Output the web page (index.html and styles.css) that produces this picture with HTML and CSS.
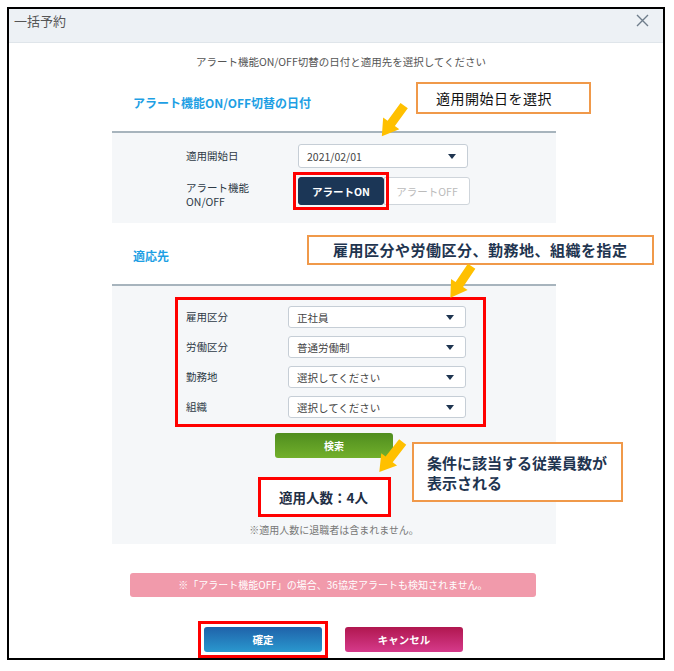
FILE: index.html
```html
<!DOCTYPE html>
<html lang="ja">
<head>
    <meta charset="UTF-8">
    <meta name="viewport" content="width=device-width, initial-scale=1.0">
    <title>一括予約</title>
    <link rel="stylesheet" href="styles.css">
</head>
<body>
    <div class="dialog">
        <div class="dialog-header">
            <span class="dialog-title">一括予約</span>
            <span class="dialog-close">
                <svg width="13" height="13" viewBox="0 0 13 13"><path d="M1 1L12 12M12 1L1 12" stroke="#6f7d8b" stroke-width="1.4" fill="none"/></svg>
            </span>
        </div>

        <div class="dialog-body">
            <p class="lead">アラート機能ON/OFF切替の日付と適用先を選択してください</p>

            <!-- 切替日付 -->
            <h2 class="block-title">アラート機能ON/OFF切替の日付</h2>
            <div class="panel panel-date">
                <div class="field">
                    <span class="field-label">適用開始日</span>
                    <div class="select select-wide"><span>2021/02/01</span><i class="caret"></i></div>
                </div>
                <div class="field">
                    <span class="field-label field-label-2">アラート機能<br>ON/OFF</span>
                    <div class="toggle">
                        <button class="toggle-btn is-on mark">アラートON</button>
                        <button class="toggle-btn">アラートOFF</button>
                    </div>
                </div>
            </div>

            <!-- 適応先 -->
            <h2 class="block-title">適応先</h2>
            <div class="panel panel-target">
                <div class="field-group">
                    <div class="field field-sm">
                        <span class="field-label">雇用区分</span>
                        <div class="select"><span>正社員</span><i class="caret"></i></div>
                    </div>
                    <div class="field field-sm">
                        <span class="field-label">労働区分</span>
                        <div class="select"><span>普通労働制</span><i class="caret"></i></div>
                    </div>
                    <div class="field field-sm">
                        <span class="field-label">勤務地</span>
                        <div class="select"><span>選択してください</span><i class="caret"></i></div>
                    </div>
                    <div class="field field-sm">
                        <span class="field-label">組織</span>
                        <div class="select"><span>選択してください</span><i class="caret"></i></div>
                    </div>
                </div>
                <button class="btn-search">検索</button>
                <div class="count">適用人数：4人</div>
                <p class="note">※適用人数に退職者は含まれません。</p>
            </div>

            <div class="warning">※「アラート機能OFF」の場合、36協定アラートも検知されません。</div>

            <div class="actions">
                <button class="btn btn-ok mark">確定</button>
                <button class="btn btn-cancel">キャンセル</button>
            </div>
        </div>

        <!-- 説明用の吹き出し -->
        <div class="callout callout-date">適用開始日を選択</div>
        <div class="callout callout-target">雇用区分や労働区分、勤務地、組織を指定</div>
        <div class="callout callout-count">条件に該当する従業員数が<br>表示される</div>

        <svg class="arrow arrow-date" width="44" height="44" viewBox="0 0 44 44"><polygon transform="translate(22,22) rotate(126) translate(-19,0)" points="0,-4.5 22,-4.5 22,-10 38,0 22,10 22,4.5 0,4.5" fill="#ffc000"/></svg>
        <svg class="arrow arrow-target" width="44" height="44" viewBox="0 0 44 44"><polygon transform="translate(22,22) rotate(124) translate(-19,0)" points="0,-4.5 22,-4.5 22,-10 38,0 22,10 22,4.5 0,4.5" fill="#ffc000"/></svg>
        <svg class="arrow arrow-count" width="44" height="44" viewBox="0 0 44 44"><polygon transform="translate(22,22) rotate(128) translate(-19,0)" points="0,-4.5 22,-4.5 22,-10 38,0 22,10 22,4.5 0,4.5" fill="#ffc000"/></svg>
    </div>
</body>
</html>
```

FILE: styles.css
```css
* {
    box-sizing: border-box;
}
body {
    margin: 0;
    font-family: "Noto Sans CJK JP", "Noto Sans", sans-serif;
    color: #333;
    background: #fff;
}
.dialog {
    position: relative;
    margin: 7px 0 0 7px;
    width: 658px;
    height: 653px;
    border: 2px solid #000;
    background: #fff;
}
.dialog-header {
    height: 34px;
    background: #edf1f5;
    border-bottom: 1px solid #dfe5ea;
    display: flex;
    align-items: flex-start;
    justify-content: space-between;
    padding: 0 14px 0 5px;
}
.dialog-title {
    font-size: 13px;
    line-height: 24px;
    color: #555;
}
.dialog-close {
    margin-top: 5px;
    line-height: 0;
}
.lead {
    margin: 11px 0 0;
    font-size: 10.5px;
    line-height: 16px;
    color: #555;
    text-align: center;
    padding-left: 10px;
}
.block-title {
    margin: 25px 0 20px 103px;
    padding-left: 21px;
    font-size: 12px;
    line-height: 16px;
    color: #1e9fe4;
}
.panel {
    margin-left: 103px;
    width: 444px;
    background: #f5f7f9;
    border-top: 2px solid #a7b4bd;
}
.panel-date {
    padding: 11px 0 18px 74px;
    display: flex;
    flex-direction: column;
    gap: 9px;
}
.panel-target {
    padding: 11px 0 7px;
}
.field {
    display: flex;
    align-items: center;
}
.field-label {
    width: 112px;
    font-size: 10.5px;
    line-height: 14px;
    color: #2e3a46;
}
.field-label-2 {
    margin: 4px 0 -4px;
}
.select {
    width: 170px;
    height: 24px;
    background: #fff;
    border: 1px solid #c6ced6;
    border-radius: 3px;
    display: flex;
    align-items: center;
    justify-content: space-between;
    padding: 0 11px 0 8px;
    font-size: 10.5px;
    color: #444;
}
.caret {
    width: 0;
    height: 0;
    border-left: 4px solid transparent;
    border-right: 4px solid transparent;
    border-top: 5px solid #1f3550;
}
.toggle {
    display: flex;
}
.toggle-btn {
    width: 86px;
    height: 28px;
    font-family: inherit;
    font-size: 10.5px;
    color: #bbb;
    background: #fff;
    border: 1px solid #cfd5db;
    border-radius: 0 3px 3px 0;
}
.toggle-btn.is-on {
    color: #fff;
    font-weight: bold;
    background: #1b3656;
    border-color: #1b3656;
    border-radius: 3px;
}
.mark {
    position: relative;
    z-index: 1;
}
.mark::after {
    content: "";
    position: absolute;
    top: -6px;
    right: -6px;
    bottom: -6px;
    left: -6px;
    border: 3px solid #f00;
}
.field-group {
    margin-left: 63px;
    width: 311px;
    border: 3px solid #f00;
    padding: 6px 0 6px 8px;
    display: flex;
    flex-direction: column;
    gap: 8px;
}
.field-sm .field-label {
    width: 102px;
}
.field-sm .select {
    width: 178px;
    height: 22px;
}
.btn-search {
    display: block;
    margin: 6px auto 0;
    width: 118px;
    height: 25px;
    border: none;
    border-radius: 3px;
    background: linear-gradient(#4f8d1f, #72b02b);
    color: #fff;
    font-family: inherit;
    font-size: 10px;
    font-weight: bold;
}
.count {
    margin: 19px 0 0 146px;
    width: 133px;
    height: 40px;
    border: 3px solid #f00;
    background: #fff;
    font-size: 13.5px;
    font-weight: bold;
    color: #1f2f45;
    line-height: 34px;
    padding-left: 18px;
}
.note {
    margin: 6px 0 0;
    font-size: 10px;
    line-height: 14px;
    color: #777;
    text-align: center;
}
.warning {
    margin: 29px 0 0 121px;
    width: 406px;
    height: 24px;
    background: #f19aab;
    border-radius: 3px;
    color: #fff;
    font-size: 10px;
    line-height: 24px;
    text-align: center;
}
.actions {
    margin: 30px 0 0 195px;
    display: flex;
    gap: 23px;
}
.btn {
    width: 118px;
    height: 25px;
    border: none;
    border-radius: 3px;
    color: #fff;
    font-family: inherit;
    font-size: 10.5px;
    font-weight: bold;
}
.btn-ok {
    background: linear-gradient(#1f62a9, #2a98cf);
}
.btn-cancel {
    background: linear-gradient(#b0174f, #d63a8b);
}
.callout {
    position: absolute;
    background: #fff;
    border: 2px solid #f0994a;
    color: #1f3550;
    z-index: 2;
}
.callout-date {
    left: 407px;
    top: 73px;
    width: 175px;
    height: 32px;
    padding-left: 18px;
    font-size: 14px;
    letter-spacing: 0.5px;
    line-height: 28px;
    color: #111;
}
.callout-target {
    left: 298px;
    top: 226px;
    width: 347px;
    height: 30px;
    padding-left: 24px;
    font-size: 15px;
    font-weight: bold;
    letter-spacing: 0.5px;
    line-height: 26px;
}
.callout-count {
    left: 403px;
    top: 433px;
    width: 211px;
    height: 60px;
    padding: 9px 0 0 13px;
    font-size: 15px;
    font-weight: bold;
    line-height: 20px;
}
.arrow {
    position: absolute;
    z-index: 3;
}
.arrow-date {
    left: 362px;
    top: 90px;
}
.arrow-target {
    left: 430px;
    top: 251px;
}
.arrow-count {
    left: 360px;
    top: 426px;
}
```
